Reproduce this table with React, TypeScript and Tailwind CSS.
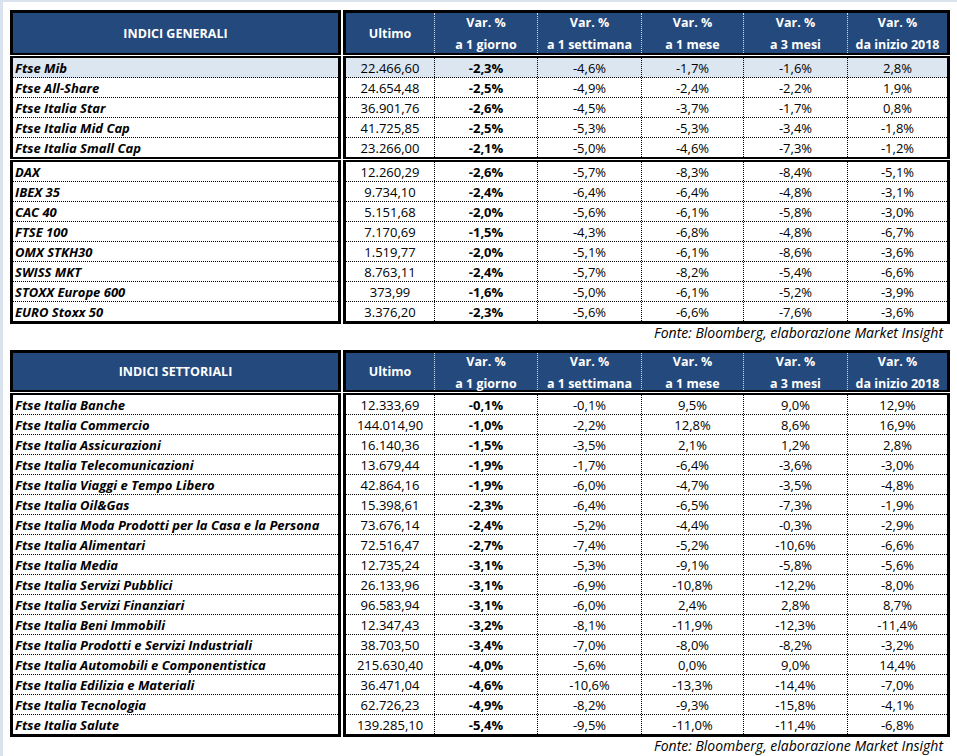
import React from "react";

type Row = { name: string; values: string[]; highlight?: boolean };

const colW = ["w-[88px]", "w-[103px]", "w-[104px]", "w-[102px]", "w-[104px]", "w-[100px]"];

const heads = [
  ["Var. %", "a 1 giorno"],
  ["Var. %", "a 1 settimana"],
  ["Var. %", "a 1 mese"],
  ["Var. %", "a 3 mesi"],
  ["Var. %", "da inizio 2018"],
];

const r = (name: string, ...values: string[]): Row => ({ name, values });

const generali: Row[][] = [
  [
    { ...r("Ftse Mib", "22.466,60", "-2,3%", "-4,6%", "-1,7%", "-1,6%", "2,8%"), highlight: true },
    r("Ftse All-Share", "24.654,48", "-2,5%", "-4,9%", "-2,4%", "-2,2%", "1,9%"),
    r("Ftse Italia Star", "36.901,76", "-2,6%", "-4,5%", "-3,7%", "-1,7%", "0,8%"),
    r("Ftse Italia Mid Cap", "41.725,85", "-2,5%", "-5,3%", "-5,3%", "-3,4%", "-1,8%"),
    r("Ftse Italia Small Cap", "23.266,00", "-2,1%", "-5,0%", "-4,6%", "-7,3%", "-1,2%"),
  ],
  [
    r("DAX", "12.260,29", "-2,6%", "-5,7%", "-8,3%", "-8,4%", "-5,1%"),
    r("IBEX 35", "9.734,10", "-2,4%", "-6,4%", "-6,4%", "-4,8%", "-3,1%"),
    r("CAC 40", "5.151,68", "-2,0%", "-5,6%", "-6,1%", "-5,8%", "-3,0%"),
    r("FTSE 100", "7.170,69", "-1,5%", "-4,3%", "-6,8%", "-4,8%", "-6,7%"),
    r("OMX STKH30", "1.519,77", "-2,0%", "-5,1%", "-6,1%", "-8,6%", "-3,6%"),
    r("SWISS MKT", "8.763,11", "-2,4%", "-5,7%", "-8,2%", "-5,4%", "-6,6%"),
    r("STOXX Europe 600", "373,99", "-1,6%", "-5,0%", "-6,1%", "-5,2%", "-3,9%"),
    r("EURO Stoxx 50", "3.376,20", "-2,3%", "-5,6%", "-6,6%", "-7,6%", "-3,6%"),
  ],
];

const settoriali: Row[][] = [
  [
    r("Ftse Italia Banche", "12.333,69", "-0,1%", "-0,1%", "9,5%", "9,0%", "12,9%"),
    r("Ftse Italia Commercio", "144.014,90", "-1,0%", "-2,2%", "12,8%", "8,6%", "16,9%"),
    r("Ftse Italia Assicurazioni", "16.140,36", "-1,5%", "-3,5%", "2,1%", "1,2%", "2,8%"),
    r("Ftse Italia Telecomunicazioni", "13.679,44", "-1,9%", "-1,7%", "-6,4%", "-3,6%", "-3,0%"),
    r("Ftse Italia Viaggi e Tempo Libero", "42.864,16", "-1,9%", "-6,0%", "-4,7%", "-3,5%", "-4,8%"),
    r("Ftse Italia Oil&Gas", "15.398,61", "-2,3%", "-6,4%", "-6,5%", "-7,3%", "-1,9%"),
    r("Ftse Italia Moda Prodotti per la Casa e la Persona", "73.676,14", "-2,4%", "-5,2%", "-4,4%", "-0,3%", "-2,9%"),
    r("Ftse Italia Alimentari", "72.516,47", "-2,7%", "-7,4%", "-5,2%", "-10,6%", "-6,6%"),
    r("Ftse Italia Media", "12.735,24", "-3,1%", "-5,3%", "-9,1%", "-5,8%", "-5,6%"),
    r("Ftse Italia Servizi Pubblici", "26.133,96", "-3,1%", "-6,9%", "-10,8%", "-12,2%", "-8,0%"),
    r("Ftse Italia Servizi Finanziari", "96.583,94", "-3,1%", "-6,0%", "2,4%", "2,8%", "8,7%"),
    r("Ftse Italia Beni Immobili", "12.347,43", "-3,2%", "-8,1%", "-11,9%", "-12,3%", "-11,4%"),
    r("Ftse Italia Prodotti e Servizi Industriali", "38.703,50", "-3,4%", "-7,0%", "-8,0%", "-8,2%", "-3,2%"),
    r("Ftse Italia Automobili e Componentistica", "215.630,40", "-4,0%", "-5,6%", "0,0%", "9,0%", "14,4%"),
    r("Ftse Italia Edilizia e Materiali", "36.471,04", "-4,6%", "-10,6%", "-13,3%", "-14,4%", "-7,0%"),
    r("Ftse Italia Tecnologia", "62.726,23", "-4,9%", "-8,2%", "-9,3%", "-15,8%", "-4,1%"),
    r("Ftse Italia Salute", "139.285,10", "-5,4%", "-9,5%", "-11,0%", "-11,4%", "-6,8%"),
  ],
];

function Table({ title, groups, tall }: { title: string; groups: Row[][]; tall?: boolean }) {
  const headH = tall ? "h-[45px]" : "h-[42px]";
  return (
    <div className="flex flex-col gap-[1px]">
      {/* header */}
      <div className="flex gap-[2px]">
        <div className={`w-[331px] ${headH} pt-[2px] border-x-[3px] border-t-[3px] border-b-2 border-black bg-[#24497c] text-white font-bold text-[12.5px] flex items-center justify-center`}>
          {title}
        </div>
        <div className={`w-[607px] ${headH} border-x-[3px] border-t-[3px] border-b-2 border-black bg-[#24497c] text-white font-bold text-[12.5px] flex`}>
          <div className={`${colW[0]} pt-[2px] flex items-center justify-center`}>Ultimo</div>
          {heads.map((h, i) => (
            <div
              key={i}
              className={`${colW[i + 1]} pt-[2px] border-l border-dotted border-white/80 flex flex-col items-center justify-center leading-[22px]`}
            >
              <span>{h[0]}</span>
              <span>{h[1]}</span>
            </div>
          ))}
        </div>
      </div>
      {/* body groups */}
      {groups.map((rows, gi) => (
        <div key={gi} className="flex gap-[2px]">
          <div className={`w-[331px] border-x-[3px] border-t-2 border-black ${gi === groups.length - 1 ? "border-b-[3px]" : "border-b-2"}`}>
            {rows.map((row, ri) => (
              <div
                key={ri}
                className={`flex items-center pl-[2px] pt-[2px] font-bold italic text-[13px] ${row.highlight ? "bg-[#dce6f1]" : ""} ${ri < rows.length - 1 ? "h-5 border-b border-dotted border-black" : "h-[19px]"}`}
              >
                {row.name}
              </div>
            ))}
          </div>
          <div className={`w-[607px] border-x-[3px] border-t-2 border-black ${gi === groups.length - 1 ? "border-b-[3px]" : "border-b-2"}`}>
            {rows.map((row, ri) => (
              <div
                key={ri}
                className={`flex text-[13px] ${row.highlight ? "bg-[#dce6f1]" : ""} ${ri < rows.length - 1 ? "h-5 border-b border-dotted border-black" : "h-[19px]"}`}
              >
                {row.values.map((v, vi) => (
                  <div
                    key={vi}
                    className={`${colW[vi]} pt-[2px] flex items-center justify-center ${vi > 0 ? "border-l border-dotted border-black" : ""} ${vi === 1 ? "font-bold" : ""}`}
                  >
                    {v}
                  </div>
                ))}
              </div>
            ))}
          </div>
        </div>
      ))}
    </div>
  );
}

function Fonte() {
  return (
    <div className="h-[26px] flex justify-end items-start pr-[14px] italic text-[14px] leading-[18px]">
      Fonte: Bloomberg, elaborazione Market Insight
    </div>
  );
}

export default function App() {
  return (
    <div className="w-[957px] h-[756px] bg-[#dae2ee] pl-[3px] pt-[2px] overflow-hidden" style={{ fontFamily: '"Open Sans", "Liberation Sans", sans-serif' }}>
      <div className="h-full bg-white pl-[7px] pt-[8px] text-black">
        <Table title="INDICI GENERALI" groups={generali} tall />
        <Fonte />
        <Table title="INDICI SETTORIALI" groups={settoriali} />
        <Fonte />
      </div>
    </div>
  );
}
